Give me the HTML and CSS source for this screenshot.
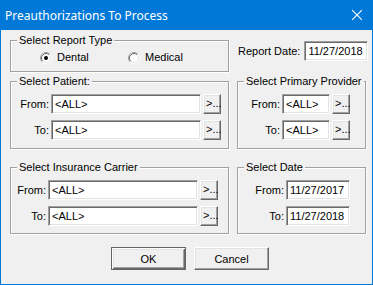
FILE: index.html
```html
<!DOCTYPE html>
<html lang="en">
<head>
  <meta charset="UTF-8">
  <title>Preauthorizations To Process</title>
  <link rel="stylesheet" href="styles.css">
</head>
<body>

  <div class="window">
    <div class="titlebar">
      <span class="title">Preauthorizations To Process</span>
      <svg class="close" width="10" height="10" viewBox="0 0 10 10">
        <path d="M0 0 L10 10 M10 0 L0 10" stroke="#fff" stroke-width="1.1" fill="none"/>
      </svg>
    </div>

    <div class="dialog">
      <div class="row row-one">
        <div class="group report-type">
          <div class="group-title">Select Report Type</div>
          <div class="radios">
            <label class="radio">
              <svg width="12" height="12" viewBox="0 0 12 12">
                <circle cx="6" cy="6" r="5" fill="#fff"/>
                <path d="M2.11 9.89 A5.5 5.5 0 0 1 9.89 2.11" stroke="#a0a0a0" fill="none"/>
                <path d="M9.89 2.11 A5.5 5.5 0 0 1 2.11 9.89" stroke="#fff" fill="none"/>
                <path d="M2.82 9.18 A4.5 4.5 0 0 1 9.18 2.82" stroke="#696969" fill="none"/>
                <path d="M9.18 2.82 A4.5 4.5 0 0 1 2.82 9.18" stroke="#e3e3e3" fill="none"/>
                <circle cx="6" cy="6" r="2" fill="#000"/>
              </svg>
              Dental
            </label>
            <label class="radio">
              <svg width="12" height="12" viewBox="0 0 12 12">
                <circle cx="6" cy="6" r="5" fill="#fff"/>
                <path d="M2.11 9.89 A5.5 5.5 0 0 1 9.89 2.11" stroke="#a0a0a0" fill="none"/>
                <path d="M9.89 2.11 A5.5 5.5 0 0 1 2.11 9.89" stroke="#fff" fill="none"/>
                <path d="M2.82 9.18 A4.5 4.5 0 0 1 9.18 2.82" stroke="#696969" fill="none"/>
                <path d="M9.18 2.82 A4.5 4.5 0 0 1 2.82 9.18" stroke="#e3e3e3" fill="none"/>
              </svg>
              Medical
            </label>
          </div>
        </div>

        <div class="report-date">
          <span class="label">Report Date:</span>
          <span class="field date">11/27/2018</span>
        </div>
      </div>

      <div class="row row-two">
        <div class="group patient">
          <div class="group-title">Select Patient:</div>
          <div class="field-row">
            <span class="label">From:</span>
            <span class="field">&lt;ALL&gt;</span>
            <span class="btn small">&gt;...</span>
          </div>
          <div class="field-row">
            <span class="label">To:</span>
            <span class="field">&lt;ALL&gt;</span>
            <span class="btn small">&gt;...</span>
          </div>
        </div>

        <div class="group provider">
          <div class="group-title">Select Primary Provider</div>
          <div class="field-row">
            <span class="label">From:</span>
            <span class="field">&lt;ALL&gt;</span>
            <span class="btn small">&gt;...</span>
          </div>
          <div class="field-row">
            <span class="label">To:</span>
            <span class="field">&lt;ALL&gt;</span>
            <span class="btn small">&gt;...</span>
          </div>
        </div>
      </div>

      <div class="row row-three">
        <div class="group carrier">
          <div class="group-title">Select Insurance Carrier</div>
          <div class="field-row">
            <span class="label">From:</span>
            <span class="field">&lt;ALL&gt;</span>
            <span class="btn small">&gt;...</span>
          </div>
          <div class="field-row">
            <span class="label">To:</span>
            <span class="field">&lt;ALL&gt;</span>
            <span class="btn small">&gt;...</span>
          </div>
        </div>

        <div class="group dates">
          <div class="group-title">Select Date</div>
          <div class="field-row">
            <span class="label">From:</span>
            <span class="field date">11/27/2017</span>
          </div>
          <div class="field-row">
            <span class="label">To:</span>
            <span class="field date">11/27/2018</span>
          </div>
        </div>
      </div>

      <div class="buttons">
        <span class="btn push default">OK</span>
        <span class="btn push">Cancel</span>
      </div>
    </div>
  </div>

</body>
</html>
```

FILE: styles.css
```css
body {
  margin: 0;
  padding: 0;
  background-color: #f0f0f0;
  font-family: "Liberation Sans", Arial, sans-serif;
  font-size: 11px;
  color: #000;
}

.window {
  width: 373px;
  height: 285px;
  box-sizing: border-box;
  display: flex;
  flex-direction: column;
}

.titlebar {
  height: 30px;
  flex: none;
  background-color: #0078d7;
  display: flex;
  align-items: center;
  justify-content: space-between;
  padding: 0 11px 0 5px;
}

.title {
  color: #fff;
  font-family: "Noto Sans", sans-serif;
  font-size: 12px;
}

.dialog {
  flex: 1;
  border: 1px solid #0078d7;
  border-top: none;
  padding: 10px 0 0 9px;
}

.row {
  display: flex;
  gap: 8px;
}

.row-two {
  margin-top: 9px;
}

.row-three {
  margin-top: 18px;
}

/* etched group frame */
.group {
  border: 1px solid #a0a0a0;
  box-shadow: inset 1px 1px #fff, 1px 1px #fff;
  box-sizing: border-box;
}

.report-type,
.patient,
.carrier {
  width: 219px;
}

.provider,
.dates {
  width: 129px;
}

.group-title {
  width: fit-content;
  margin: -7px 0 0 6px;
  padding: 0 2px;
  line-height: 13px;
  background-color: #f0f0f0;
}

.radios {
  display: flex;
  margin: 4px 0 0 29px;
  padding-bottom: 7px;
}

.radio {
  width: 88px;
  display: flex;
  align-items: center;
  gap: 5px;
  line-height: 13px;
}

.report-date {
  display: flex;
  align-items: center;
  gap: 4px;
  height: 20px;
  margin-top: 1px;
  padding-left: 1px;
}

.field {
  display: block;
  box-sizing: border-box;
  height: 20px;
  padding-left: 3px;
  line-height: 18px;
  background-color: #fff;
  border: 1px solid;
  border-color: #a0a0a0 #fff #fff #a0a0a0;
  box-shadow: inset 1px 1px #696969, inset -1px -1px #e3e3e3;
  white-space: nowrap;
}

.field.date {
  width: 64px;
}

.field-row {
  display: flex;
  align-items: center;
  height: 20px;
  margin-top: 6px;
}

.field-row .label {
  text-align: right;
  flex: none;
}

.patient .field-row:first-of-type,
.provider .field-row:first-of-type {
  margin-top: 10px;
}

.patient,
.provider {
  padding-bottom: 8px;
}

.carrier .field-row:first-of-type,
.dates .field-row:first-of-type {
  margin-top: 12px;
}

.carrier,
.dates {
  padding-bottom: 7px;
}

.patient .label { width: 38px; margin-right: 2px; }
.patient .field { width: 150px; }

.carrier .label { width: 35px; margin-right: 2px; }
.carrier .field { width: 150px; }

.provider .label { width: 42px; margin-right: 2px; }
.provider .field { width: 48px; }

.dates .label { width: 46px; margin-right: 2px; }

/* raised 3d buttons */
.btn {
  display: flex;
  align-items: center;
  justify-content: center;
  box-sizing: border-box;
  background-color: #f0f0f0;
  border: 1px solid;
  border-color: #fff #696969 #696969 #fff;
  box-shadow: inset -1px -1px #a0a0a0, inset 1px 1px #e3e3e3;
}

.btn.small {
  width: 18px;
  height: 20px;
  margin-left: 2px;
  padding-bottom: 2px;
  justify-content: flex-start;
  padding-left: 2px;
}

.buttons {
  display: flex;
  gap: 8px;
  margin-top: 13px;
  padding-left: 101px;
}

.btn.push {
  width: 75px;
  height: 23px;
}

.btn.default {
  border: 1px solid #646464;
  box-shadow: inset 1px 1px #fff, inset -1px -1px #696969, inset 2px 2px #e3e3e3, inset -2px -2px #a0a0a0;
}
```
